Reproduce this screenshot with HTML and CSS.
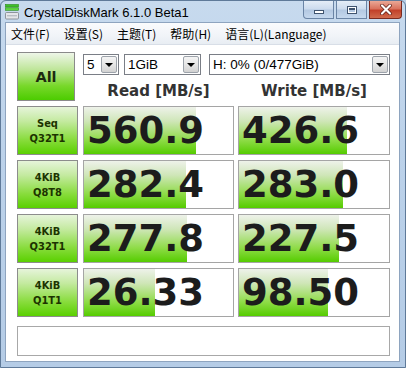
FILE: index.html
```html
<!DOCTYPE html>
<html>
<head>
<meta charset="utf-8">
<link rel="stylesheet" href="styles.css">
</head>
<body>
<div class="win">
  <div class="titlebar">
    <svg class="appicon" width="16" height="16" viewBox="0 0 16 16">
      <rect x="1.5" y="0.5" width="13" height="2.5" fill="#3fbf2a" stroke="#2a8a1c" stroke-width="0.6"/>
      <rect x="1.5" y="3.8" width="13" height="2.5" fill="#5fd640" stroke="#2a8a1c" stroke-width="0.6"/>
      <rect x="1.5" y="8.5" width="13" height="6.5" rx="1" fill="#e4e6ea" stroke="#7b8089" stroke-width="0.8"/>
      <rect x="3" y="11" width="10" height="1.4" fill="#b9bdc4"/>
    </svg>
    <span class="title">CrystalDiskMark 6.1.0 Beta1</span>
    <div class="ctrls">
      <div class="cbtn"><span class="minglyph"></span></div>
      <div class="cbtn"><span class="maxglyph"></span></div>
      <div class="cbtn close">
        <svg width="14" height="11" viewBox="0 0 14 11"><path d="M3 1.5 L11 9.5 M11 1.5 L3 9.5" stroke="#5a1a12" stroke-width="3.6" stroke-linecap="round"/><path d="M3 1.5 L11 9.5 M11 1.5 L3 9.5" stroke="#ffffff" stroke-width="2.2" stroke-linecap="round"/></svg>
      </div>
    </div>
  </div>
  <div class="frame">
    <div class="menubar">
      <span>文件(F)</span>
      <span>设置(S)</span>
      <span>主题(T)</span>
      <span>帮助(H)</span>
      <span>语言(L)(Language)</span>
    </div>
    <div class="client">
      <div class="top">
        <div class="allbtn">All</div>
        <div class="selects">
          <div class="sel s1"><span class="seltext">5</span><span class="arrow"></span></div>
          <div class="sel s2"><span class="seltext">1GiB</span><span class="arrow"></span></div>
          <div class="sel s3"><span class="seltext">H: 0% (0/477GiB)</span><span class="arrow"></span></div>
        </div>
        <div class="head">Read [MB/s]</div>
        <div class="head">Write [MB/s]</div>
      </div>
      <div class="grid">
        <div class="lbl">Seq<br>Q32T1</div>
        <div class="val" style="background-size: 112px 100%">560.9</div>
        <div class="val" style="background-size: 108px 100%">426.6</div>

        <div class="lbl">4KiB<br>Q8T8</div>
        <div class="val" style="background-size: 102px 100%">282.4</div>
        <div class="val" style="background-size: 104px 100%">283.0</div>

        <div class="lbl">4KiB<br>Q32T1</div>
        <div class="val" style="background-size: 103px 100%">277.8</div>
        <div class="val" style="background-size: 100px 100%">227.5</div>

        <div class="lbl">4KiB<br>Q1T1</div>
        <div class="val" style="background-size: 71px 100%">26.33</div>
        <div class="val" style="background-size: 89px 100%">98.50</div>
      </div>
      <div class="comment"></div>
    </div>
  </div>
</div>
</body>
</html>
```
FILE: styles.css
```css
* { box-sizing: border-box; }
html, body { margin: 0; padding: 0; }
body { width: 406px; height: 368px; overflow: hidden; background: #b9cfe7; }

.win {
  width: 406px;
  height: 368px;
  display: flex;
  flex-direction: column;
  background: linear-gradient(to bottom, #c7daee 0%, #bcd2ea 40%, #b5cce6 100%);
  border: 1px solid #5f7a99;
  border-radius: 6px 6px 0 0;
}

.titlebar {
  height: 21px;
  display: flex;
  align-items: center;
  flex: none;
}
.appicon { margin-left: 3px; margin-top: 1px; flex: none; }
.title {
  margin-left: 4px;
  font-family: "Liberation Sans", Arial, sans-serif;
  font-size: 13px;
  color: #000;
  margin-top: 1px;
}
.ctrls {
  margin-left: auto;
  margin-right: 3px;
  display: flex;
  gap: 2px;
  align-self: flex-start;
}
.cbtn {
  width: 31px;
  height: 18px;
  border: 1px solid #6a84a5;
  border-top: none;
  background: linear-gradient(to bottom, #e4edf7 0%, #cddcee 45%, #b4c9e2 55%, #c5d8ee 100%);
  display: flex;
  align-items: center;
  justify-content: center;
}
.cbtn:first-child { border-radius: 0 0 0 4px; }
.cbtn.close {
  width: 33px;
  border-color: #7a2a20;
  border-radius: 0 0 4px 0;
  background: linear-gradient(to bottom, #eaa896 0%, #d9735e 45%, #c2412a 55%, #d06a4c 100%);
}
.minglyph {
  width: 10px;
  height: 4px;
  margin-top: 5px;
  background: #fff;
  border: 1px solid #40546f;
}
.maxglyph {
  width: 10px;
  height: 8px;
  border: 1px solid #40546f;
  background: transparent;
  box-shadow: inset 0 0 0 1px #fff, inset 0 2px 0 1px #40546f;
}

.frame {
  flex: 1;
  display: flex;
  flex-direction: column;
  margin: 0 5px 5px 4px;
  border: 1px solid #8ea4bf;
  background: #fff;
}

.menubar {
  height: 22px;
  flex: none;
  display: flex;
  align-items: center;
  gap: 14px;
  padding-left: 5px;
  font-family: "Noto Sans CJK SC", "Noto Sans", sans-serif;
  font-size: 12px;
  color: #000;
  background: linear-gradient(to bottom, #fafbfd 0%, #f1f4f8 60%, #e8edf3 100%);
  border-bottom: 1px solid #d8dee7;
}

.client {
  flex: 1;
  background: #fff;
  padding: 7px 10px 0 11px;
  display: flex;
  flex-direction: column;
}

.top {
  display: grid;
  grid-template-columns: 62px 151px 152px;
  grid-template-rows: 23px 26px;
  column-gap: 4px;
}
.allbtn {
  grid-row: 1 / 3;
  grid-column: 1;
  width: 58px;
  height: 49px;
  border: 1px solid #8a8a8a;
  background: linear-gradient(to bottom, #eef6e8 0%, #bfe69a 35%, #78d82a 70%, #4ccc00 100%);
  display: flex;
  align-items: center;
  justify-content: center;
  font-family: "DejaVu Sans", Verdana, sans-serif;
  font-weight: bold;
  font-size: 14.5px;
  color: #1d2a10;
}
.selects {
  grid-row: 1;
  grid-column: 2 / 4;
  display: flex;
  align-items: flex-start;
  padding-top: 2px;
}
.sel {
  height: 21px;
  border: 1px solid #7a7e86;
  background: #fff;
  display: flex;
  align-items: center;
  font-family: "Liberation Sans", Arial, sans-serif;
  font-size: 13.5px;
  color: #000;
}
.s1 { width: 36px; }
.s2 { width: 77px; margin-left: 5px; }
.s3 { width: 181px; margin-left: 8px; }
.seltext { padding-left: 3px; flex: 1; white-space: nowrap; }
.arrow {
  width: 16px;
  height: 17px;
  margin-right: 1px;
  border: 1px solid #9da3ab;
  border-radius: 2px;
  background: linear-gradient(to bottom, #f4f4f4 0%, #e6e6e6 50%, #d2d2d2 100%);
  display: flex;
  align-items: center;
  justify-content: center;
}
.arrow::after {
  content: "";
  width: 0;
  height: 0;
  border-left: 4px solid transparent;
  border-right: 4px solid transparent;
  border-top: 4px solid #000;
  margin-top: 1px;
}
.head {
  grid-row: 2;
  text-align: center;
  padding-top: 6px;
  line-height: 20px;
  font-family: "DejaVu Sans", Verdana, sans-serif;
  font-weight: bold;
  font-size: 15px;
  color: #333;
  white-space: nowrap;
}

.grid {
  margin-top: 5px;
  display: grid;
  grid-template-columns: 62px 151px 152px;
  grid-auto-rows: 49px;
  column-gap: 4px;
  row-gap: 5px;
}
.lbl {
  width: 61px;
  border: 1px solid #8c8c8c;
  background: linear-gradient(to bottom, #e6f4da 0%, #c4eaa0 30%, #88dc3c 70%, #5ad000 100%);
  display: flex;
  align-items: center;
  justify-content: center;
  text-align: center;
  font-family: "DejaVu Sans Condensed", "DejaVu Sans", sans-serif;
  font-weight: bold;
  font-size: 11px;
  line-height: 15px;
  color: #1c3300;
}
.val {
  border: 1px solid #a5a5a5;
  background-color: #fff;
  background-image: linear-gradient(to bottom, #eef2ea 0%, #cfe6b8 30%, #8fdc48 70%, #55cc00 100%);
  background-repeat: no-repeat;
  display: flex;
  align-items: center;
  padding-left: 3px;
  font-family: "DejaVu Sans", Verdana, sans-serif;
  font-weight: bold;
  font-size: 37px;
  color: #1c1c1c;
  overflow: hidden;
  white-space: nowrap;
}

.comment {
  margin-top: 9px;
  height: 30px;
  width: 373px;
  border: 1px solid #a8a8a8;
  background: #fff;
}
```
